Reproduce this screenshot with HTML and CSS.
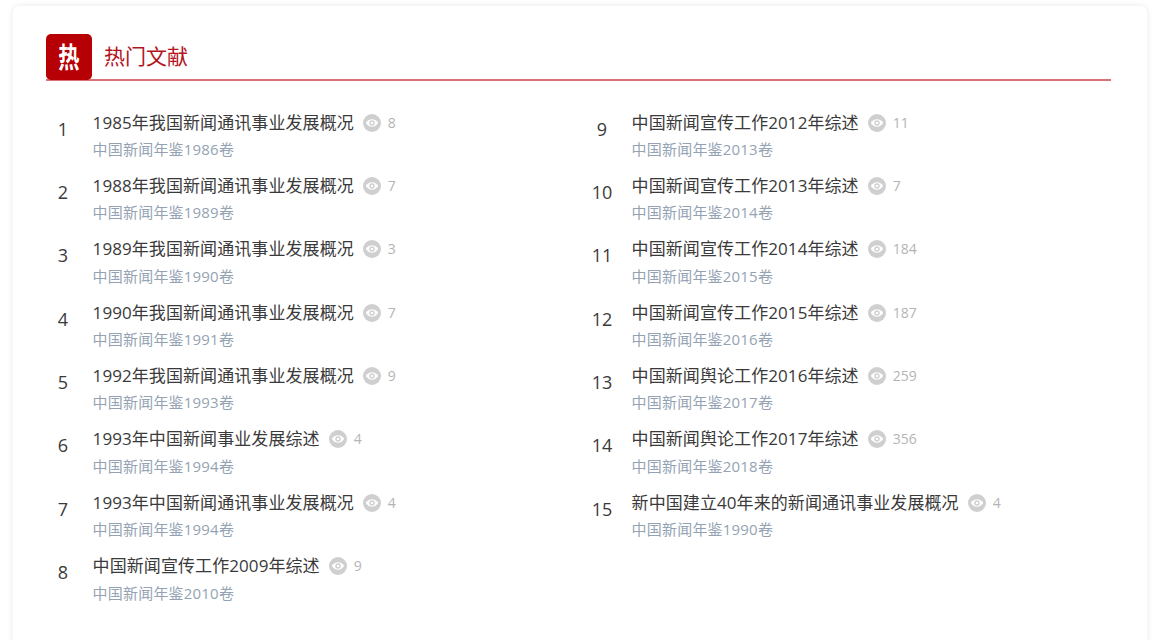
FILE: index.html
```html
<!DOCTYPE html>
<html lang="zh-CN">
<head>
<meta charset="utf-8">
<title>热门文献</title>
<link rel="stylesheet" href="styles.css">
</head>
<body>
<svg class="defs" width="0" height="0" aria-hidden="true"><defs><symbol id="eye" viewBox="0 0 18 18"><circle cx="9" cy="9" r="9" fill="#cfcfcf"/><path d="M2.8 9C4.3 6.6 6.5 5.3 9 5.3S13.7 6.600 15.200 9C13.700 11.400 11.500 12.700 9 12.700S4.300 11.400 2.800 9Z" fill="#fff"/><circle cx="9" cy="9" r="2.700" fill="#cfcfcf"/><circle cx="9" cy="9" r="1.300" fill="#fff"/></symbol></defs></svg>
<main class="card">
  <header class="head">
    <span class="badge"><span class="badge-glyph">热</span></span>
    <h2 class="head-title">热门文献</h2>
  </header>
  <ol class="list">
    <li class="item"><span class="num">1</span><div class="body"><div class="line"><a class="title">1985年我国新闻通讯事业发展概况</a><svg class="eye"><use href="#eye"/></svg><span class="count">8</span></div><div class="sub">中国新闻年鉴1986卷</div></div></li>
    <li class="item"><span class="num">2</span><div class="body"><div class="line"><a class="title">1988年我国新闻通讯事业发展概况</a><svg class="eye"><use href="#eye"/></svg><span class="count">7</span></div><div class="sub">中国新闻年鉴1989卷</div></div></li>
    <li class="item"><span class="num">3</span><div class="body"><div class="line"><a class="title">1989年我国新闻通讯事业发展概况</a><svg class="eye"><use href="#eye"/></svg><span class="count">3</span></div><div class="sub">中国新闻年鉴1990卷</div></div></li>
    <li class="item"><span class="num">4</span><div class="body"><div class="line"><a class="title">1990年我国新闻通讯事业发展概况</a><svg class="eye"><use href="#eye"/></svg><span class="count">7</span></div><div class="sub">中国新闻年鉴1991卷</div></div></li>
    <li class="item"><span class="num">5</span><div class="body"><div class="line"><a class="title">1992年我国新闻通讯事业发展概况</a><svg class="eye"><use href="#eye"/></svg><span class="count">9</span></div><div class="sub">中国新闻年鉴1993卷</div></div></li>
    <li class="item"><span class="num">6</span><div class="body"><div class="line"><a class="title">1993年中国新闻事业发展综述</a><svg class="eye"><use href="#eye"/></svg><span class="count">4</span></div><div class="sub">中国新闻年鉴1994卷</div></div></li>
    <li class="item"><span class="num">7</span><div class="body"><div class="line"><a class="title">1993年中国新闻通讯事业发展概况</a><svg class="eye"><use href="#eye"/></svg><span class="count">4</span></div><div class="sub">中国新闻年鉴1994卷</div></div></li>
    <li class="item"><span class="num">8</span><div class="body"><div class="line"><a class="title">中国新闻宣传工作2009年综述</a><svg class="eye"><use href="#eye"/></svg><span class="count">9</span></div><div class="sub">中国新闻年鉴2010卷</div></div></li>
    <li class="item"><span class="num">9</span><div class="body"><div class="line"><a class="title">中国新闻宣传工作2012年综述</a><svg class="eye"><use href="#eye"/></svg><span class="count">11</span></div><div class="sub">中国新闻年鉴2013卷</div></div></li>
    <li class="item"><span class="num">10</span><div class="body"><div class="line"><a class="title">中国新闻宣传工作2013年综述</a><svg class="eye"><use href="#eye"/></svg><span class="count">7</span></div><div class="sub">中国新闻年鉴2014卷</div></div></li>
    <li class="item"><span class="num">11</span><div class="body"><div class="line"><a class="title">中国新闻宣传工作2014年综述</a><svg class="eye"><use href="#eye"/></svg><span class="count">184</span></div><div class="sub">中国新闻年鉴2015卷</div></div></li>
    <li class="item"><span class="num">12</span><div class="body"><div class="line"><a class="title">中国新闻宣传工作2015年综述</a><svg class="eye"><use href="#eye"/></svg><span class="count">187</span></div><div class="sub">中国新闻年鉴2016卷</div></div></li>
    <li class="item"><span class="num">13</span><div class="body"><div class="line"><a class="title">中国新闻舆论工作2016年综述</a><svg class="eye"><use href="#eye"/></svg><span class="count">259</span></div><div class="sub">中国新闻年鉴2017卷</div></div></li>
    <li class="item"><span class="num">14</span><div class="body"><div class="line"><a class="title">中国新闻舆论工作2017年综述</a><svg class="eye"><use href="#eye"/></svg><span class="count">356</span></div><div class="sub">中国新闻年鉴2018卷</div></div></li>
    <li class="item"><span class="num">15</span><div class="body"><div class="line"><a class="title">新中国建立40年来的新闻通讯事业发展概况</a><svg class="eye"><use href="#eye"/></svg><span class="count">4</span></div><div class="sub">中国新闻年鉴1990卷</div></div></li>
  </ol>
</main>
</body>
</html>
```
FILE: styles.css
```css
* { box-sizing: border-box; }
html, body { margin: 0; height: 100%; overflow: hidden; }
body {
  background: #fff;
  font-family: "Open Sans", "Noto Sans CJK SC", sans-serif;
  padding: 6px 17px 0 13px;
}
.defs { position: absolute; }
.card {
  height: 660px;
  padding: 28px 36px 0 33px;
  background: #fff;
  border-radius: 6px;
  box-shadow: 0 0 6px rgba(0, 0, 0, 0.09);
}
.head {
  display: flex;
  align-items: center;
  height: 47px;
  border-bottom: 2px solid #d9737a;
}
.badge {
  display: flex;
  align-items: center;
  justify-content: center;
  align-self: flex-start;
  flex: none;
  width: 46px;
  height: 46px;
  margin-right: 12px;
  background: #b60005;
  border-radius: 5px;
  color: #fff;
  font-size: 28px;
  font-weight: 700;
  line-height: 1;
}
.badge-glyph {
  display: block;
  transform: scaleX(0.76);
}
.head-title {
  margin: 0;
  color: #b3141c;
  font-size: 21px;
  font-weight: 400;
  line-height: 1;
}
.list {
  display: grid;
  grid-template-rows: repeat(8, 63.35px);
  grid-template-columns: 539px 1fr;
  grid-auto-flow: column;
  margin: 0;
  padding: 26.600px 0 0;
  list-style: none;
}
.item { display: flex; }
.num {
  flex: none;
  width: 34px;
  padding-top: 9px;
  color: #3a3a3a;
  font-size: 18px;
  line-height: 24px;
  text-align: center;
}
.body { margin-left: 12.600px; }
.line {
  display: flex;
  align-items: center;
  height: 30px;
}
.title {
  color: #3a3a3a;
  font-size: 17px;
  letter-spacing: 0.08px;
  line-height: 30px;
  white-space: nowrap;
}
.eye {
  flex: none;
  width: 18px;
  height: 18px;
  margin-left: 9px;
}
.count {
  margin-left: 7px;
  color: #b4b4b4;
  font-size: 14px;
  line-height: 30px;
}
.sub {
  margin-top: 0.500px;
  color: #94a3b3;
  font-size: 15px;
  letter-spacing: 0.2px;
  line-height: 22px;
  white-space: nowrap;
}
```
